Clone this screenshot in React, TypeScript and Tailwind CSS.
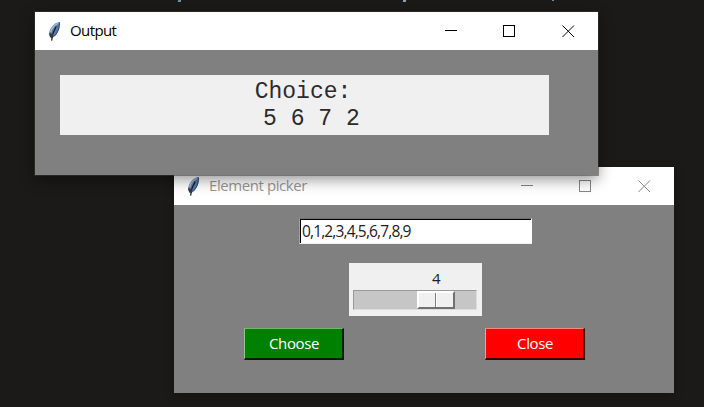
import type { ReactNode } from "react";

function Feather() {
  return (
    <svg width="13" height="21" viewBox="0 0 13 21" className="shrink-0">
      <path d="M11.4 0.9C7 1.6 2.6 5.6 1.3 11.2C0.9 13.6 1.6 15.8 3.2 17C6.8 16.2 9.6 12.6 10.9 8.4C11.7 5.6 12 2.8 11.4 0.9Z" fill="#5a7cab" />
      <path d="M10.2 2.2C7 3.4 3.8 6.8 2.6 11.2" stroke="#9db6d2" strokeWidth="1.5" fill="none" />
      <path d="M11.4 1.3C11.8 5 10.6 10.8 6.4 15" stroke="#33466a" strokeWidth="1" fill="none" />
      <path d="M8.2 5.6L5 12.2L3.6 19.6" stroke="#141b28" strokeWidth="1.2" fill="none" />
      <path d="M1.3 11.7C1.1 14 1.9 16 3.4 17.5L5.6 15.2L4.2 13.2Z" fill="#363a42" />
    </svg>
  );
}

function Controls({ color }: { color: string }) {
  return (
    <svg width="130" height="14" viewBox="0 0 130 14" stroke={color} fill="none" className="mr-[23px] shrink-0">
      <path d="M0 6.5H12" />
      <rect x="58.5" y="1.5" width="11" height="11" />
      <path d="M117.5 1.5L129 13M129 1.5L117.5 13" />
    </svg>
  );
}

type WindowProps = {
  title: string;
  active?: boolean;
  place: string;
  titleClass: string;
  children: ReactNode;
};

function Window({ title, active, place, titleClass, children }: WindowProps) {
  return (
    <section className={`absolute flex flex-col bg-[#808080] ${place}`}>
      <header className="flex h-[38px] shrink-0 items-center bg-white pl-[13px]">
        <Feather />
        <h1 className={`ml-[9px] flex-1 whitespace-nowrap pb-[2px] text-[15px] leading-5 ${titleClass}`}>{title}</h1>
        <Controls color={active ? "#000000" : "#858585"} />
      </header>
      {children}
    </section>
  );
}

export default function App() {
  return (
    <main className="relative h-[407px] w-[704px] overflow-hidden bg-[#1b1a18] font-['Open_Sans','Noto_Sans',sans-serif]">
      <div className="flex h-[2px] pl-[178px]">
        <i className="h-[2px] w-[3px] -skew-x-12 bg-[#6d96a8]" />
        <i className="ml-[222px] h-[2px] w-[3px] -skew-x-12 bg-[#8aa9b4]" />
        <i className="ml-[146px] h-px w-[2px] bg-[#6f8f98]" />
      </div>

      <Window
        title="Element picker"
        place="left-[174px] top-[167px] h-[226px] w-[500px] shadow-[0_2px_8px_rgba(0,0,0,0.35)]"
        titleClass="text-[#969696] tracking-[-0.42px]"
      >
        <div className="flex flex-col items-center">
          <div className="mt-[13px] mr-[17px] flex h-[26px] w-[233px] items-center border border-t-[#707070] border-l-[#a0a0a0] border-r-white border-b-[#eeeeee] bg-white">
            <div className="flex h-full w-full items-center border-t border-l border-black pb-[2px] pl-px">
              <span className="whitespace-nowrap text-[15.5px] leading-5 tracking-[-0.85px] text-[#202020]">0,1,2,3,4,5,6,7,8,9</span>
            </div>
          </div>
          <div className="mt-[19px] mr-[17px] flex h-[53px] w-[133px] flex-col bg-[#f0f0f0] px-1">
            <span className="mt-[5px] mb-px pl-[79px] text-[15px] leading-[21px] text-[#202020]">4</span>
            <div className="flex h-5 w-[124px] border border-t-[#999999] border-l-[#999999] border-r-[#dddddd] border-b-[#dddddd] bg-[#c6c6c6] pl-[63px]">
              <div className="flex h-[18px] w-[38px] border-2 border-t-white border-l-white border-r-[#707070] border-b-[#707070] bg-[#f0f0f0]">
                <i className="w-[17px] border-r border-[#808080]" />
                <i className="w-px bg-white" />
              </div>
            </div>
          </div>
        </div>
        <div className="mt-3 flex gap-[141px] pl-[70px] text-[15px] leading-5 text-white">
          <button className="h-8 w-[100px] border-t border-l border-r-2 border-b-2 border-t-[#70b870] border-l-[#8fc48f] border-r-[#002000] border-b-[#001c00] bg-[#008000] pb-[2px] pl-px tracking-[-0.4px]">
            Choose
          </button>
          <button className="h-8 w-[100px] border-t border-l border-r-2 border-b-2 border-t-[#ff8585] border-l-[#ff9999] border-r-[#380000] border-b-[#380000] bg-[#ff0000] pb-[2px] pl-px tracking-[-0.4px]">
            Close
          </button>
        </div>
      </Window>

      <Window
        title="Output"
        active
        place="left-[35px] top-[12px] h-[163px] w-[563px] shadow-[0_0_0_1px_rgba(60,60,60,0.5),0_4px_14px_rgba(0,0,0,0.45)]"
        titleClass="text-black tracking-[-0.6px]"
      >
        <div className="mt-[25px] ml-[25px] h-[60px] w-[489px] bg-[#f0f0f0] pt-[4px] text-center font-['Liberation_Mono',monospace] text-[23px] leading-[26px] text-[#2b2b2b]">
          <div className="pr-[3px]">Choice:</div>
          <div className="whitespace-pre pt-px">{" 5 6 7 2"}</div>
        </div>
      </Window>
    </main>
  );
}
